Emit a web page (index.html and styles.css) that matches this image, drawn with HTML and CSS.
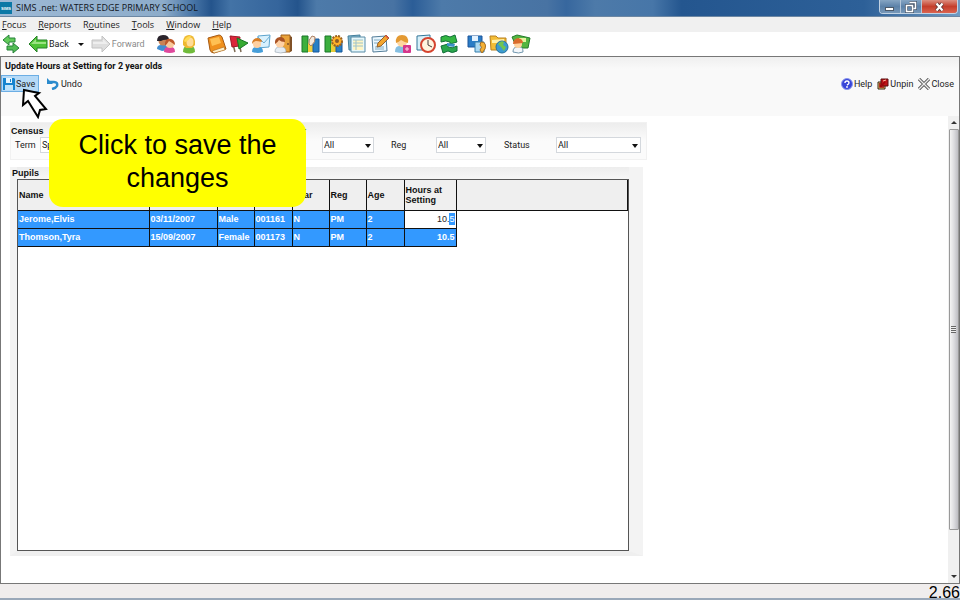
FILE: index.html
```
<!DOCTYPE html>
<html lang="en">
<head>
<meta charset="UTF-8">
<title>SIMS .net: WATERS EDGE PRIMARY SCHOOL</title>
<link rel="stylesheet" href="styles.css">
</head>
<body>

<!-- title bar -->
<header class="titlebar">
    <svg class="logo" viewBox="0 0 12 12"><rect width="12" height="12" fill="#0b78a6"/><text x="6" y="8" text-anchor="middle" class="logo-text">SIMS</text></svg>
    <span class="title">SIMS .net: WATERS EDGE PRIMARY SCHOOL</span>
    <div class="window-buttons">
        <button class="win" aria-label="Minimise"><svg width="12" height="10"><rect x="1.500" y="5.500" width="8" height="3" fill="#fff" stroke="#4c5968"/></svg></button>
        <button class="win" aria-label="Restore"><svg width="12" height="12"><path d="M4.500 1.500h6v6h-2M1.500 4.500h6v6h-6z" fill="none" stroke="#48586c" stroke-width="3"/><path d="M4.500 1.500h6v6h-2M1.500 4.500h6v6h-6z" fill="none" stroke="#fff" stroke-width="1.500"/></svg></button>
        <button class="win win-close" aria-label="Close window"><svg width="12" height="10"><path d="M2.500 1.500l6 7M8.500 1.500l-6 7" stroke="#5e3a3a" stroke-width="4"/><path d="M2.500 1.500l6 7M8.500 1.500l-6 7" stroke="#fff" stroke-width="2.200"/></svg></button>
    </div>
</header>

<!-- menu -->
<nav class="menubar">
    <a href="#"><u>F</u>ocus</a>
    <a href="#"><u>R</u>eports</a>
    <a href="#">R<u>o</u>utines</a>
    <a href="#"><u>T</u>ools</a>
    <a href="#"><u>W</u>indow</a>
    <a href="#"><u>H</u>elp</a>
</nav>

<!-- toolbar -->
<div class="toolbar">
    <button class="tool" aria-label="Switch"><svg viewBox="0 0 20 20"><path d="M2 6l6-5v3h6v4H8v3z" fill="#62cb5a" stroke="#27823a"/><path d="M18 14l-6-5v3H6v4h6v3z" fill="#52bd55" stroke="#27823a"/></svg></button>
    <button class="nav-button"><svg viewBox="0 0 20 20"><path d="M1 10l8-8v4h10v8H9v4z" fill="#4fc336" stroke="#258127"/><path d="M3 10l5-5v3h10v2z" fill="#9be382"/></svg>Back</button>
    <button class="drop" aria-label="Back history"><i></i></button>
    <button class="nav-button forward"><svg viewBox="0 0 20 20"><path d="M19 10l-8-8v4H1v8h10v4z" fill="#dedede" stroke="#c2c2c2"/><path d="M17 10l-5-5v3H2v2z" fill="#eee"/></svg>Forward</button>

    <div class="tools tools-people">
        <button class="tool" aria-label="Pupils"><svg viewBox="0 0 20 20"><path d="M1 15q0-4 4-4h4q3 1 3 5l-6 1z" fill="#438ed1"/><circle cx="7" cy="7" r="4.500" fill="#c98355"/><path d="M1 7q0-6 6-6t6 5q-5-1-8 1z" fill="#29232b"/><path d="M8 18q0-5 4-5h3q4 0 4 5-5 2-11 0z" fill="#df489c"/><circle cx="14" cy="10" r="4" fill="#fac99a"/><path d="M9 12V9q1-5 6-4 4 1 4 6-4-3-6-4-2 3-4 5z" fill="#bd5829"/></svg></button>
        <button class="tool" aria-label="Contacts"><svg viewBox="0 0 20 20"><path d="M4 18q0-6 4-6h4q4 0 4 6-5 3-12 0z" fill="#70bb3b"/><path d="M4 11V7q1-6 6-6t6 6v4l-3 3H7z" fill="#eeb831"/><ellipse cx="11" cy="8" rx="3.500" ry="4.500" fill="#ffdc99"/><path d="M5 7q2-5 7-5-2 5-6 6z" fill="#ffdc54"/></svg></button>
    </div>

    <div class="tools">
        <button class="tool" aria-label="Register"><svg viewBox="0 0 20 20"><path d="M1 4l11-3q2 0 3 2l4 12-12 4q-3 0-4-3z" fill="#f0911d" stroke="#a65a13"/><path d="M5 17l12-4 1 3-11 3z" fill="#fff1c9" stroke="#ad661a" stroke-width=".6"/><path d="M3 5l9-2 2 6-9 3z" fill="#ffc052"/></svg></button>
        <button class="tool" aria-label="Behaviour"><svg viewBox="0 0 20 20"><path d="M2 2l4 16M9 4l3 14" stroke="#7d6a54" stroke-width="1.500"/><path d="M1 2l10 1-1 9-7 1z" fill="#db263b" stroke="#a11a29"/><path d="M8 4l11 5-9 6z" fill="#37aa32" stroke="#197625"/></svg></button>
        <button class="tool" aria-label="Messages"><svg viewBox="0 0 20 20"><path d="M7 2l12-1-1 12-12 1z" fill="#d9f1fd" stroke="#5da4cd"/><path d="M7 3l6 6 6-7" fill="none" stroke="#6fafd2"/><path d="M1 18q0-5 4-5h3q4 0 4 5-5 2-11 0z" fill="#469ed9"/><circle cx="6" cy="10" r="4" fill="#ffd0a0"/><path d="M1 10q0-6 6-6 4 1 4 4-4-1-6-1-2 0-4 3z" fill="#d87d25"/></svg></button>
        <button class="tool" aria-label="Leavers"><svg viewBox="0 0 20 20"><path d="M8 1h9v17H8z" fill="#e9a239" stroke="#9e5f1b"/><path d="M17 2l2 1v14l-2 1z" fill="#805127"/><circle cx="15" cy="10" r="1" fill="#805127"/><path d="M2 18q0-5 4-5h3q4 0 4 5-5 2-11 0z" fill="#e5edf4" stroke="#8794a0" stroke-width=".5"/><circle cx="7" cy="9" r="4.500" fill="#ffd1a5"/><path d="M2 10q-1-6 5-7 5 0 5 5-4 0-6-2-1 2-4 4z" fill="#a95224"/></svg></button>
    </div>

    <div class="tools tools-wide">
        <button class="tool" aria-label="Groups"><svg viewBox="0 0 20 20"><path d="M1 2h6v16H1z" fill="#3caf3e" stroke="#187728"/><path d="M7 9l5-3v12H7z" fill="#f1ce3c"/><path d="M12 5h6v13h-6z" fill="#287fc4" stroke="#17599d"/><path d="M8 10q-1-4 3-8l3 1q1 5-4 9z" fill="#f4e9dd" stroke="#ad8063"/></svg></button>
        <button class="tool" aria-label="Group setup"><svg viewBox="0 0 20 20"><path d="M1 2h6v16H1z" fill="#3caf3e" stroke="#187728"/><path d="M7 9h5v9H7z" fill="#e9cd36"/><path d="M12 8h6v10h-6z" fill="#287fc4" stroke="#17599d"/><circle cx="13" cy="7" r="5" fill="#ffb128" stroke="#9b611f" stroke-width="2" stroke-dasharray="2 1"/><circle cx="13" cy="7" r="2" fill="#895a29"/></svg></button>
        <button class="tool" aria-label="Lists"><svg viewBox="0 0 20 20"><path d="M1 2l12-1v15H2z" fill="#7ab3cc" stroke="#447f9c"/><path d="M4 3h14v15H4z" fill="#e6f7fb" stroke="#598ca7"/><path d="M6 6h10v10H6z" fill="#fff5c4"/><path d="M6 6h10M6 9h10M6 12h10M9 6v10" stroke="#9cc3cd"/></svg></button>
        <button class="tool" aria-label="Edit"><svg viewBox="0 0 20 20"><path d="M2 3l14-1 1 15-14 1z" fill="#eaf7ff" stroke="#537d99"/><path d="M4 6h9M4 9h8M5 13h9M5 15h9" stroke="#81aabf"/><path d="M7 13l1-4 8-8 3 3-8 8z" fill="#f3a52d" stroke="#93602d"/><path d="M15 2l1-1 3 3-1 1z" fill="#dc5246"/></svg></button>
        <button class="tool" aria-label="Person details"><svg viewBox="0 0 20 20"><path d="M2 18q0-6 4-6h6q4 0 4 6-6 2-14 0z" fill="#85bfe1"/><circle cx="9" cy="8" r="5" fill="#ffd69f"/><path d="M3 9q-1-8 6-8 7 0 6 8-4-1-7-3-2 2-5 3z" fill="#e49a33"/><rect x="10" y="11" width="8" height="8" rx="1" fill="#d6368b"/><path d="M12 15h4M14 13v4" stroke="#ffd2e6"/></svg></button>
        <button class="tool" aria-label="Attendance"><svg viewBox="0 0 20 20"><path d="M1 2l13-1v15H1z" fill="#d7f0fa" stroke="#347699"/><circle cx="12" cy="11" r="7" fill="#fff4df" stroke="#d5442f" stroke-width="2"/><path d="M12 6v5l4 2" fill="none" stroke="#443c3c"/></svg></button>
        <button class="tool" aria-label="Transfer"><svg viewBox="0 0 20 20"><path d="M2 3q5-3 9 0l5-2 2 7-7 2V8Q7 6 2 8z" fill="#33b642" stroke="#126e38"/><path d="M18 17q-5 3-9 0l-5 2-2-7 7-2v3q4 2 9-1z" fill="#29a64c" stroke="#126e38"/><path d="M8 9l8 1-1 3-7-1z" fill="#3c91c8"/></svg></button>
    </div>

    <div class="tools">
        <button class="tool" aria-label="Documents"><svg viewBox="0 0 20 20"><path d="M1 2h14v11H1z" fill="#2b7cc5" stroke="#1c559b"/><path d="M5 2h6v5H5z" fill="#e3f2ff"/><path d="M8 8h9v10H8z" fill="#abd8f1" stroke="#367eac"/><path d="M14 8q6 0 4 7l-3 4-2-3q3-3 0-5z" fill="#f4b034" stroke="#a46c21"/></svg></button>
        <button class="tool" aria-label="Web folder"><svg viewBox="0 0 20 20"><path d="M1 2h6l2 2h8v12H2z" fill="#f4bd36" stroke="#b88121"/><path d="M3 6l12-1v4H3z" fill="#fff0a8"/><circle cx="13" cy="13" r="6" fill="#3d9bd1" stroke="#23729f"/><path d="M9 10q3-4 6-2l-1 3 3 2-2 4-3-4z" fill="#72c551"/></svg></button>
        <button class="tool" aria-label="School contacts"><svg viewBox="0 0 20 20"><path d="M1 3l5-2 13 3-2 10H6z" fill="#54b540" stroke="#257c2c"/><path d="M8 4h7v4H8z" fill="#e6f39e"/><path d="M2 18q0-5 4-5h3q3 0 3 5-4 2-10 0z" fill="#f4f7fb" stroke="#7197ae"/><circle cx="7" cy="10" r="4" fill="#ffd29e"/><path d="M2 10q0-5 5-6 5 1 5 5z" fill="#d96b2d"/></svg></button>
    </div>
</div>

<!-- work area -->
<main class="workspace">
    <section class="screen-head">
        <h1>Update Hours at Setting for 2 year olds</h1>
        <div class="actions">
            <button class="action save"><svg viewBox="0 0 12 12"><path d="M0 0h11l1 1v11H0z" fill="#1684cf"/><path d="M3 0h6v5H3z" fill="#e7f6ff"/><path d="M7 1h1v3H7z" fill="#1684cf"/><path d="M2 7h8v5H2z" fill="#bfe3fa"/></svg>Save</button>
            <button class="action undo"><svg viewBox="0 0 12 12"><path d="M3 4h4q4 0 3 4-1 2-5 3" fill="none" stroke="#2b8bcd" stroke-width="2.500"/><path d="M0 0v6h6z" fill="#2b8bcd"/></svg>Undo</button>
            <div class="screen-actions">
                <button class="action"><svg viewBox="0 0 12 12"><circle cx="6" cy="6" r="5.500" fill="#3845d8" stroke="#8a96ed"/><path d="M4 5q0-2 2-2t2 2q0 1-2 2" fill="none" stroke="#fff" stroke-width="1.400"/><circle cx="6" cy="9" r=".9" fill="#fff"/></svg>Help</button>
                <button class="action"><svg viewBox="0 0 12 12"><path d="M1 4h7v7H1z" fill="#f5d779" stroke="#352413"/><path d="M4 1h7v7H4z" fill="#bd1417" stroke="#5b1112"/><path d="M3 9l5-5M3 5v4h4" fill="none" stroke="#9c080c" stroke-width="1.600"/><path d="M6 3l3-1" stroke="#ffb6a0"/></svg>Unpin</button>
                <button class="action"><svg viewBox="0 0 12 12"><path d="M1 1l10 10M11 1L1 11" stroke="#555" stroke-width="3.200"/><path d="M1 1l10 10M11 1L1 11" stroke="#eee" stroke-width="1.400"/></svg>Close</button>
            </div>
        </div>
    </section>

    <div class="scroll-area">
        <div class="content">
            <section class="panel filters">
                <div class="panel-titles"><h2>Census</h2><h2>Filter</h2></div>
                <div class="filter-row">
                    <label for="term">Term</label>
                    <span class="pick pick-term"><select id="term"><option>Spring</option></select></span>
                    <label for="year">Year</label>
                    <span class="pick pick-year"><select id="year"><option>All</option></select></span>
                    <label for="reg">Reg</label>
                    <span class="pick pick-reg"><select id="reg"><option>All</option></select></span>
                    <label for="status">Status</label>
                    <span class="pick"><select id="status"><option>All</option></select></span>
                </div>
            </section>

            <section class="panel pupils">
                <h2>Pupils</h2>
                <div class="grid">
                    <table>
                        <colgroup><col class="c-name"><col class="c-dob"><col class="c-sex"><col class="c-adm"><col class="c-year"><col class="c-reg"><col class="c-age"><col class="c-hours"><col></colgroup>
                        <thead>
                            <tr><th>Name</th><th>DOB</th><th>Sex</th><th>Adm</th><th>Year</th><th>Reg</th><th>Age</th><th>Hours at Setting</th><th></th></tr>
                        </thead>
                        <tbody>
                            <tr><td>Jerome,Elvis</td><td>03/11/2007</td><td>Male</td><td>001161</td><td>N</td><td>PM</td><td>2</td><td class="editing"><input id="hours" value="10.5" aria-label="Hours at Setting"></td><td class="filler"></td></tr>
                            <tr><td>Thomson,Tyra</td><td>15/09/2007</td><td>Female</td><td>001173</td><td>N</td><td>PM</td><td>2</td><td class="number">10.5</td><td class="filler"></td></tr>
                        </tbody>
                    </table>
                </div>
            </section>
        </div>
        <div class="scrollbar">
            <i class="up"></i>
            <div class="thumb"><i class="grip"></i></div>
            <i class="down"></i>
        </div>
    </div>
</main>

<footer class="statusbar"><span class="page-number">2.66</span></footer>

<!-- instruction on top of the screen -->
<div class="callout">Click to save the changes</div>
<svg class="pointer" viewBox="0 0 28 32"><path d="M4 3l-1 15 5-4 10 16 2-7 6-1L15 9l4-3z" fill="#fff" stroke="#000" stroke-width="2"/></svg>

<script>
var hours = document.getElementById("hours");
hours.focus();
hours.setSelectionRange(3, 4);
</script>
</body>
</html>
```
FILE: styles.css
```
* {
    box-sizing: border-box;
}

body {
    margin: 0;
    height: 100vh;
    display: flex;
    flex-direction: column;
    overflow: hidden;
    background: #fff;
    color: #222;
    font: 9px/12px Roboto, sans-serif;
}

button {
    display: flex;
    align-items: center;
    padding: 0;
    border: 0;
    background: none;
    color: inherit;
    font: inherit;
}

h1, h2 {
    margin: 0;
    color: #111;
    font: bold 9px/12px "Liberation Sans", sans-serif;
}

/* title bar */
.titlebar {
    height: 17px;
    flex: none;
    display: flex;
    align-items: flex-start;
    background: linear-gradient(90deg, #9db9d5 0, #8dacca 17%, #4a77a8 20%, #24548c 22%, #4373a6 24%, #35659c 29%, #24548c 31%, #4d7aa9 33%, #4873a3 41%, #2b5d97 43%, #4d7aa9 46%, #4873a3 57%, #37679e 59%, #4d7aa9 62%, #4776a8 68%, #24568f 71%, #2d6098 90%, #6f9bc3 100%);
    border-bottom: 1px solid #6c87a3;
}

.logo {
    width: 12px;
    height: 12px;
    margin-top: 2px;
}

.logo-text {
    fill: #fff;
    font: bold 4px "Liberation Sans", sans-serif;
}

.title {
    margin-left: 4px;
    color: #10151c;
    font: 9px/16px "Open Sans", sans-serif;
}

.window-buttons {
    display: flex;
    margin-left: auto;
    margin-right: 2px;
    border: 1px solid #c1d2e3;
    border-top: 0;
    border-radius: 0 0 4px 4px;
    overflow: hidden;
}

.win {
    width: 21px;
    height: 13px;
    justify-content: center;
    border-right: 1px solid #b4c6d9;
    background: linear-gradient(#86a5c3, #5c82a9 50%, #7898b8);
}

.win-close {
    width: 35px;
    border: 0;
    background: linear-gradient(#dc8f80, #c43e2b 50%, #dc6450);
}

/* menu */
.menubar {
    height: 15px;
    flex: none;
    display: flex;
    gap: 12px;
    padding-left: 2px;
    background: #f0f0f0;
    font: 9px/15px "Open Sans", sans-serif;
}

.menubar a {
    color: #222;
    text-decoration: none;
}

/* toolbar */
.toolbar {
    height: 24px;
    flex: none;
    display: flex;
    align-items: center;
    padding-left: 1px;
}

.tool svg, .nav-button svg {
    display: block;
    width: 20px;
    height: 20px;
}

.nav-button {
    gap: 1px;
    margin-left: 7px;
}

.drop {
    margin-left: 9px;
}

.drop i {
    border: 3px solid transparent;
    border-top-color: #111;
    border-bottom: 0;
}

.forward {
    color: #8a8a8a;
}

.tools {
    display: flex;
    gap: 2px;
    margin-left: 8px;
}

.tools-people {
    gap: 3px;
    margin-left: 11px;
}

.tools-wide {
    gap: 3px;
}

/* work area */
.workspace {
    flex: 1;
    min-height: 0;
    display: flex;
    flex-direction: column;
    border: 1px solid #777;
}

.screen-head {
    height: 59px;
    flex: none;
    padding-top: 3px;
    background: linear-gradient(#efefef, #f9f9f9 12px);
}

.screen-head h1 {
    padding-left: 4px;
    font-family: Roboto, sans-serif;
}

.actions {
    display: flex;
    margin-top: 3px;
}

.action {
    height: 17px;
    gap: 2px;
}

.action svg {
    width: 12px;
    height: 12px;
}

.save {
    width: 38px;
    gap: 1px;
    padding-left: 1px;
    border: 1px solid #6caee4;
    background: #b6daf7;
}

.undo {
    margin-left: 8px;
}

.screen-actions {
    display: flex;
    gap: 5px;
    margin-left: auto;
    margin-right: 5px;
}

.screen-actions .action {
    gap: 1px;
}

.scroll-area {
    flex: 1;
    min-height: 0;
    display: flex;
}

.content {
    flex: 1;
    display: flex;
    flex-direction: column;
    gap: 7px;
    padding: 6px 0 27px 9px;
}

.panel {
    border: 1px solid #f1f1f1;
    background: linear-gradient(#ededed, #fbfbfb 18px);
}

.filters {
    width: 637px;
    height: 38px;
}

.panel-titles {
    display: grid;
    grid-template-columns: 273px 1fr;
    padding-top: 2px;
}

.filter-row {
    display: grid;
    grid-template-columns: 25px 248px 34px 69px 45px 68px 52px 85px;
    align-items: center;
    padding-left: 4px;
}

.pick {
    position: relative;
    width: 100%;
}

.pick::after {
    content: "";
    position: absolute;
    right: 3px;
    top: 7px;
    border: 3px solid transparent;
    border-top: 4px solid #111;
    border-bottom: 0;
    pointer-events: none;
}

.pick select {
    display: block;
    width: 100%;
    height: 16px;
    padding: 0 0 0 1px;
    appearance: none;
    border: 1px solid #d4d8dd;
    border-radius: 0;
    background: #fff;
    color: #222;
    font: inherit;
}

.pick-term {
    width: 160px;
}

.pick-year {
    width: 52px;
}

.pick-reg {
    width: 50px;
}

.pupils {
    width: 633px;
    flex: 1;
    display: flex;
    flex-direction: column;
    padding: 0;
    border: 0;
    border-left: 7px solid #f3f3f3;
    border-right: 14px solid #f3f3f3;
    border-bottom: 5px solid #efefef;
}

.pupils h2 {
    margin-left: -5px;
}

.grid {
    flex: 1;
    border: 1px solid #555;
    background: #fff;
}

table {
    width: 100%;
    table-layout: fixed;
    border-collapse: collapse;
    font: bold 9px/10px "Liberation Sans", sans-serif;
}

th, td {
    padding: 0 1px;
    border: 1px solid #111;
    text-align: left;
}

th {
    height: 30px;
    border-top: 0;
    background: #efefef;
    color: #111;
}

td {
    height: 18px;
    background: #3399ff;
    color: #fff;
}

th:first-child, td:first-child {
    border-left: 0;
}

.c-name { width: 131px; }
.c-dob { width: 68px; }
.c-sex { width: 37px; }
.c-adm { width: 38px; }
.c-year { width: 37px; }
.c-reg { width: 37px; }
.c-age { width: 38px; }
.c-hours { width: 52px; }

.number {
    text-align: right;
}

.filler {
    border: 0;
    background: #fff;
}

.editing {
    background: #fff;
}

.editing input {
    display: block;
    width: 100%;
    height: 12px;
    padding: 0;
    border: 0;
    outline: 0;
    background: #fff;
    color: #222;
    font: 9px/12px "Liberation Sans", sans-serif;
    text-align: right;
}

.editing input::selection {
    background: #3399ff;
    color: #fff;
}

/* scroll bar */
.scrollbar {
    width: 11px;
    display: flex;
    flex-direction: column;
    align-items: center;
    background: #f0f0f0;
}

.up, .down {
    margin: 5px 0;
    border: 3px solid transparent;
}

.up {
    border-bottom-color: #333;
    border-top: 0;
}

.down {
    border-top-color: #333;
    border-bottom: 0;
}

.thumb {
    width: 10px;
    flex: 1;
    display: flex;
    align-items: center;
    justify-content: center;
    margin-bottom: 40px;
    border: 1px solid #999;
    border-radius: 1px;
    background: linear-gradient(90deg, #f4f4f4, #dcdcdf 50%, #bdbdc2);
}

.grip {
    width: 5px;
    height: 7px;
    background: repeating-linear-gradient(#666 0 1px, #eee 1px 2px);
}

.statusbar {
    height: 16px;
    flex: none;
    display: flex;
    justify-content: flex-end;
    background: #f0eded;
    border-bottom: 2px solid #9aa8b9;
}

.page-number {
    color: #000;
    font: 16px/17px "Liberation Sans", sans-serif;
}

/* callout and pointer */
.callout {
    position: absolute;
    left: 49px;
    top: 119px;
    width: 257px;
    height: 88px;
    padding: 10px 22px;
    border-radius: 14px;
    background: #ffff00;
    color: #000;
    font: 27px/33px "Liberation Sans", sans-serif;
    text-align: center;
}

.pointer {
    position: absolute;
    left: 20px;
    top: 87px;
    width: 28px;
    height: 32px;
}
```
